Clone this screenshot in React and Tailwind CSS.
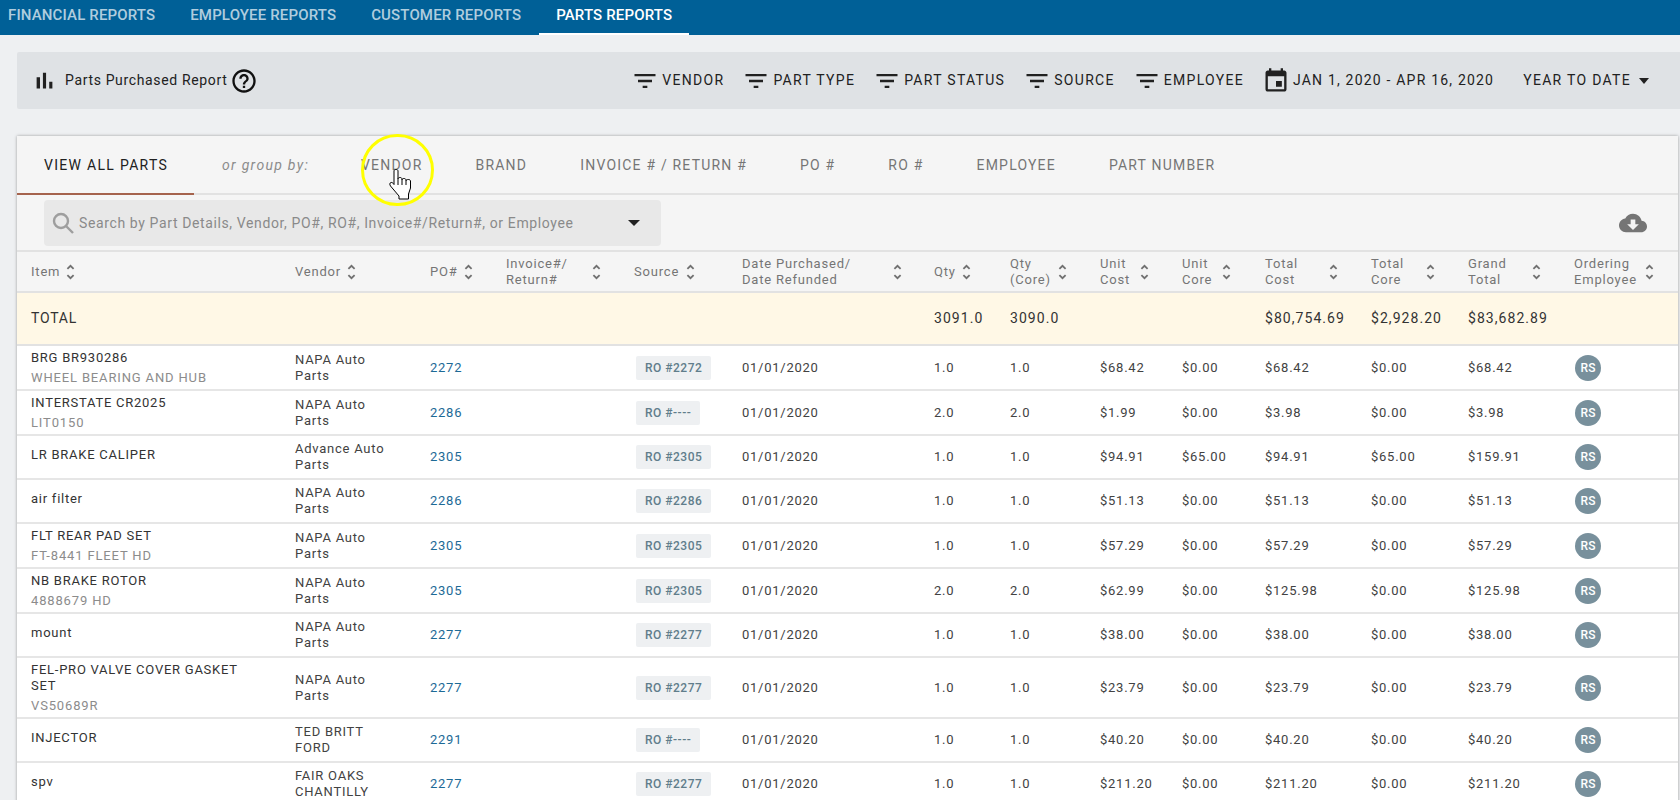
import React from "react";

const F = { fontFamily: "Roboto, sans-serif" };

const topTabs = ["Financial Reports", "Employee Reports", "Customer Reports", "Parts Reports"];
const filters = ["Vendor", "Part Type", "Part Status", "Source", "Employee"];
const groups = ["Vendor", "Brand", "Invoice # / Return #", "PO #", "RO #", "Employee", "Part Number"];

const rows = [
  { item: "BRG BR930286", sub: "WHEEL BEARING AND HUB", vendor: "NAPA Auto Parts", po: "2272", ro: "RO #2272", qty: "1.0", core: "1.0", unit: "$68.42", ucore: "$0.00", total: "$68.42", tcore: "$0.00", grand: "$68.42", h: "h-[45px]" },
  { item: "INTERSTATE CR2025", sub: "LIT0150", vendor: "NAPA Auto Parts", po: "2286", ro: "RO #----", qty: "2.0", core: "2.0", unit: "$1.99", ucore: "$0.00", total: "$3.98", tcore: "$0.00", grand: "$3.98", h: "h-[45px]" },
  { item: "LR BRAKE CALIPER", vendor: "Advance Auto Parts", po: "2305", ro: "RO #2305", qty: "1.0", core: "1.0", unit: "$94.91", ucore: "$65.00", total: "$94.91", tcore: "$65.00", grand: "$159.91", h: "h-[44px]" },
  { item: "air filter", vendor: "NAPA Auto Parts", po: "2286", ro: "RO #2286", qty: "1.0", core: "1.0", unit: "$51.13", ucore: "$0.00", total: "$51.13", tcore: "$0.00", grand: "$51.13", h: "h-[44px]" },
  { item: "FLT REAR PAD SET", sub: "FT-8441 FLEET HD", vendor: "NAPA Auto Parts", po: "2305", ro: "RO #2305", qty: "1.0", core: "1.0", unit: "$57.29", ucore: "$0.00", total: "$57.29", tcore: "$0.00", grand: "$57.29", h: "h-[45px]" },
  { item: "NB BRAKE ROTOR", sub: "4888679 HD", vendor: "NAPA Auto Parts", po: "2305", ro: "RO #2305", qty: "2.0", core: "2.0", unit: "$62.99", ucore: "$0.00", total: "$125.98", tcore: "$0.00", grand: "$125.98", h: "h-[45px]" },
  { item: "mount", vendor: "NAPA Auto Parts", po: "2277", ro: "RO #2277", qty: "1.0", core: "1.0", unit: "$38.00", ucore: "$0.00", total: "$38.00", tcore: "$0.00", grand: "$38.00", h: "h-[44px]" },
  { item: "FEL-PRO VALVE COVER GASKET SET", sub: "VS50689R", vendor: "NAPA Auto Parts", po: "2277", ro: "RO #2277", qty: "1.0", core: "1.0", unit: "$23.79", ucore: "$0.00", total: "$23.79", tcore: "$0.00", grand: "$23.79", h: "h-[61px]" },
  { item: "INJECTOR", vendor: "TED BRITT FORD", po: "2291", ro: "RO #----", qty: "1.0", core: "1.0", unit: "$40.20", ucore: "$0.00", total: "$40.20", tcore: "$0.00", grand: "$40.20", h: "h-[44px]" },
  { item: "spv", vendor: "FAIR OAKS CHANTILLY", po: "2277", ro: "RO #2277", qty: "1.0", core: "1.0", unit: "$211.20", ucore: "$0.00", total: "$211.20", tcore: "$0.00", grand: "$211.20", h: "h-[44px]" },
];

const columns = [
  { w: "w-[264px]", label: ["Item"], sort: "ml-[6px]" },
  { w: "w-[135px]", label: ["Vendor"], sort: "ml-[6px]" },
  { w: "w-[76px]", label: ["PO#"], sort: "ml-[6px]" },
  { w: "w-[128px]", label: ["Invoice#/", "Return#"], sort: "ml-[24px]" },
  { w: "w-[108px]", label: ["Source"], sort: "ml-[7px]" },
  { w: "w-[192px]", label: ["Date Purchased/", "Date Refunded"], sort: "ml-[42px]" },
  { w: "w-[76px]", label: ["Qty"], sort: "ml-[6px]" },
  { w: "w-[90px]", label: ["Qty", "(Core)"], sort: "ml-[7px]" },
  { w: "w-[82px]", label: ["Unit", "Cost"], sort: "ml-[10px]" },
  { w: "w-[83px]", label: ["Unit", "Core"], sort: "ml-[10px]" },
  { w: "w-[106px]", label: ["Total", "Cost"], sort: "ml-[31px]" },
  { w: "w-[97px]", label: ["Total", "Core"], sort: "ml-[22px]" },
  { w: "w-[106px]", label: ["Grand", "Total"], sort: "ml-[25px]" },
  { w: "w-[118px]", label: ["Ordering", "Employee"], sort: "ml-[8px]" },
];

const FilterIcon = () => (
  <svg viewBox="0 0 24 24" className="w-[28px] h-[28px] fill-[#212121] shrink-0">
    <path d="M10 18h4v-2h-4v2zM3 6v2h18V6H3zm3 7h12v-2H6v2z" />
  </svg>
);

const SortIcon = ({ className }) => (
  <svg viewBox="0 0 10 18" className={`w-[9px] h-[16px] fill-none stroke-[#707070] stroke-2 shrink-0 ${className}`}>
    <path d="M1.500 5.500 5 2l3.500 3.500M1.500 12.500 5 16l3.500-3.500" />
  </svg>
);

// click highlight + hand cursor from the screen recording
const Cursor = () => (
  <div className="absolute left-[361px] top-[134px] w-[73px] h-[72px] rounded-full border-[3px] border-[#ffff00] pointer-events-none">
    <svg viewBox="0 0 22 31" className="absolute left-[25px] top-[32px] w-[22px] h-[31px]">
      <path
        d="M5 2c0-2 4-2 4 0v8c0-2 4-2 4 0v1c0-2 4-2 4 0v1c0-2 4.500-2 4.500 0v7l-2 6v5H10v-3L1.500 17c-1-1.500-1-3 .5-3.500 1-.3 2 .5 3 2z"
        fill="#fff"
        stroke="#000"
        strokeWidth="1"
      />
      <path d="M9 10v6M13 11v5M17 12v4" fill="none" stroke="#000" strokeWidth="1" />
    </svg>
  </div>
);

export default function App() {
  return (
    <div className="relative h-[800px] overflow-hidden bg-[#eef0f2] text-[13px]" style={F}>
      <div className="h-[35px] bg-[#006097] flex pl-[8px]">
        {topTabs.map((t, i) => (
          <div
            key={t}
            className={`uppercase text-[15px] tracking-[0.15px] font-medium leading-[31px] ${i === 3 ? "text-white border-b-2 border-white px-[17px] -ml-[17px]" : "text-white/70 mr-[35px]"}`}
          >
            {t}
          </div>
        ))}
      </div>

      <div className="mt-[17px] ml-[17px] h-[57px] bg-[#dfe2e5] rounded-l-[2px] flex items-center pl-[14px] pr-[31px]">
        <svg viewBox="0 0 24 24" className="w-[27px] h-[27px] fill-[#212121]">
          <path d="M5 9.200h3V19H5zM10.600 5h2.800v14h-2.800zm5.600 8H19v6h-2.800z" />
        </svg>
        <span className="ml-[7px] text-[14px] tracking-[0.65px] text-[#212121]">Parts Purchased Report</span>
        <svg viewBox="0 0 24 24" className="ml-[3px] w-[28px] h-[28px] fill-[#111]">
          <path d="M11 18h2v-2h-2v2zm1-16C6.480 2 2 6.480 2 12s4.480 10 10 10 10-4.480 10-10S17.520 2 12 2zm0 18c-4.410 0-8-3.590-8-8s3.590-8 8-8 8 3.590 8 8-3.590 8-8 8zm0-14c-2.210 0-4 1.790-4 4h2c0-1.100.9-2 2-2s2 .9 2 2c0 2-3 1.750-3 5h2c0-2.250 3-2.500 3-5 0-2.210-1.790-4-4-4z" />
        </svg>
        <div className="flex-1" />
        {filters.map((f) => (
          <div key={f} className="flex items-center mr-[18px] uppercase text-[14px] tracking-[1.3px] text-[#212121]">
            <FilterIcon />
            <span className="ml-[3px]">{f}</span>
          </div>
        ))}
        <svg viewBox="0 0 24 24" className="w-[28px] h-[28px] fill-[#212121]">
          <path d="M17 12h-5v5h5v-5zM16 1v2H8V1H6v2H5c-1.110 0-1.990.9-1.990 2L3 19c0 1.100.89 2 2 2h14c1.100 0 2-.9 2-2V5c0-1.100-.9-2-2-2h-1V1h-2zm3 18H5V8h14v11z" />
        </svg>
        <span className="ml-[3px] uppercase text-[14px] tracking-[1.2px] text-[#212121]">Jan 1, 2020 - Apr 16, 2020</span>
        <span className="ml-[29px] uppercase text-[14px] tracking-[1.3px] text-[#212121]">Year to Date</span>
        <div className="ml-[8px] w-0 h-0 border-x-[5.5px] border-x-transparent border-t-[6px] border-t-[#212121]" />
      </div>

      <div className="mt-[27px] ml-[17px] mr-[2px] bg-[#f5f5f5] shadow-[0_0_3px_rgba(0,0,0,0.35)]">
        <div className="h-[59px] flex items-center border-b-2 border-[#e2e2e2] relative">
          <div className="w-[177px] h-[59px] -mb-[2px] pl-[27px] pt-[2px] flex items-center border-b-[2px] border-[#a5634d] uppercase text-[14px] tracking-[1.3px] text-[#212121]">
            View all parts
          </div>
          <span className="ml-[28px] w-[93px] pt-[2px] italic text-[14px] tracking-[1.3px] text-[#8c8c8c] whitespace-nowrap">or group by:</span>
          <div className="ml-[46px] pt-[2px] flex gap-[53px]">
            {groups.map((g) => (
              <span key={g} className="uppercase text-[14px] tracking-[1.2px] text-[#757575] whitespace-nowrap">
                {g}
              </span>
            ))}
          </div>
        </div>

        <div className="h-[55px] flex items-center pl-[27px] pr-[31px]">
          <div className="w-[617px] h-[46px] bg-[#e8e8e8] rounded-[4px] flex items-center pl-[7px] pr-[21px]">
            <svg viewBox="0 0 24 24" className="w-[24px] h-[24px] fill-none stroke-[#9e9e9e] stroke-[2.4] shrink-0">
              <circle cx="10" cy="10" r="7" />
              <path d="m15 15 7 7" />
            </svg>
            <span className="ml-[4px] pt-[2px] flex-1 text-[14px] tracking-[0.62px] text-[#8a8a8a] whitespace-nowrap">Search by Part Details, Vendor, PO#, RO#, Invoice#/Return#, or Employee</span>
            <div className="w-0 h-0 border-x-[6px] border-x-transparent border-t-[6px] border-t-[#212121]" />
          </div>
          <div className="flex-1" />
          <svg viewBox="0 0 24 24" className="w-[28px] h-[28px] fill-[#757575]">
            <path d="M19.350 10.040C18.670 6.590 15.640 4 12 4 9.110 4 6.600 5.640 5.350 8.040 2.340 8.360 0 10.910 0 14c0 3.310 2.690 6 6 6h13c2.760 0 5-2.240 5-5 0-2.640-2.050-4.780-4.650-4.960zM17 13l-5 5-5-5h3V9h4v4h3z" />
          </svg>
        </div>

        <table className="w-[1661px] table-fixed border-collapse bg-white">
          <colgroup>
            {columns.map((c, i) => (
              <col key={i} className={c.w} />
            ))}
          </colgroup>
          <thead>
            <tr className="h-[41px] bg-[#f5f5f5] border-y-2 border-[#e2e2e2]">
              {columns.map((c, i) => (
                <th key={i} className="pl-[14px] text-left font-normal text-[#757575] leading-[16px] tracking-[0.8px]">
                  <div className="flex items-center">
                    <div>
                      {c.label.map((l) => (
                        <div key={l} className="whitespace-nowrap">{l}</div>
                      ))}
                    </div>
                    <SortIcon className={c.sort} />
                  </div>
                </th>
              ))}
            </tr>
          </thead>
          <tbody className="text-[#424242] tracking-[0.75px] leading-[16px]">
            <tr className="h-[53px] bg-[#fff8e6] border-b-2 border-[#e2e2e2] text-[14px] tracking-[1.05px] text-[#333]">
              <td className="pl-[14px] uppercase pb-[2px] tracking-[0.8px]">Total</td>
              <td colSpan={5} />
              <td className="pl-[14px] pb-[2px]">3091.0</td>
              <td className="pl-[14px] pb-[2px]">3090.0</td>
              <td colSpan={2} />
              <td className="pl-[14px] pb-[2px]">$80,754.69</td>
              <td className="pl-[14px] pb-[2px]">$2,928.20</td>
              <td className="pl-[14px] pb-[2px]">$83,682.89</td>
              <td />
            </tr>
            {rows.map((r, i) => (
              <tr key={i} className={`${r.h} border-b-2 border-[#e6e6e6]`}>
                <td className="pl-[14px] pr-[30px]">
                  <div className={`text-[#333] ${r.sub ? "" : "pb-1"}`}>{r.item}</div>
                  {r.sub && <div className="mt-[4px] tracking-[0.85px] text-[#8c8c8c]">{r.sub}</div>}
                </td>
                <td className="pl-[14px] pr-[30px]">{r.vendor}</td>
                <td className="pl-[14px] text-[#1d6a96]">{r.po}</td>
                <td />
                <td className="pl-[16px]">
                  <span className="inline-block h-[24px] leading-[24px] px-[9px] bg-[#eef0f2] text-[12px] font-medium tracking-[0.5px] text-[#607d8b] rounded-[2px] whitespace-nowrap">{r.ro}</span>
                </td>
                <td className="pl-[14px]">01/01/2020</td>
                <td className="pl-[14px]">{r.qty}</td>
                <td className="pl-[14px]">{r.core}</td>
                <td className="pl-[14px]">{r.unit}</td>
                <td className="pl-[14px]">{r.ucore}</td>
                <td className="pl-[14px]">{r.total}</td>
                <td className="pl-[14px]">{r.tcore}</td>
                <td className="pl-[14px]">{r.grand}</td>
                <td className="pl-[15px]">
                  <div className="w-[26px] h-[26px] rounded-full bg-[#78909c] text-white text-[12px] font-medium tracking-normal flex items-center justify-center">RS</div>
                </td>
              </tr>
            ))}
          </tbody>
        </table>
      </div>

      <Cursor />
    </div>
  );
}
